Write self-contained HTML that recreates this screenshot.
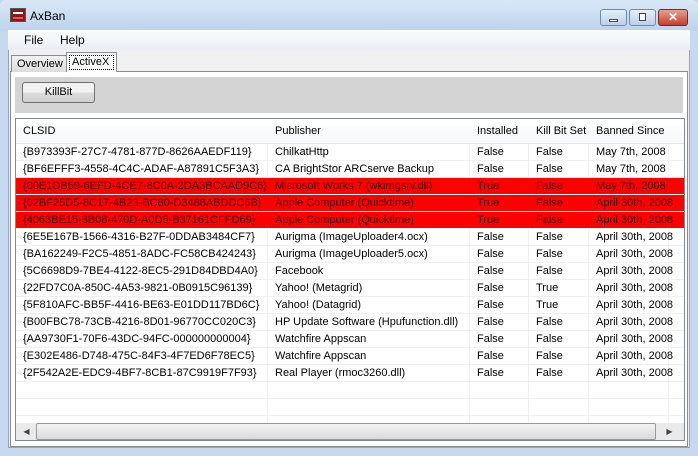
<!DOCTYPE html>
<html><head><meta charset="utf-8"><style>
*{margin:0;padding:0;box-sizing:border-box}
body{width:698px;height:456px;overflow:hidden;background:#c6d9ee;font-family:"Liberation Sans",sans-serif;font-size:11px;color:#000;position:relative}
.title{position:absolute;left:0;top:0;width:698px;height:31px;background:linear-gradient(#dae8f7,#bcd3ec);border-radius:6px 6px 0 0}
.abs{position:absolute}
.client{position:absolute;left:8px;top:30px;width:682px;height:418px;background:#f0f0f0;border:1px solid #8fa5c0}
.menu{position:absolute;left:8px;top:30px;width:682px;height:20px;background:linear-gradient(#fafcfe,#eaeef4)}
.tabpanel{position:absolute;left:10px;top:71px;width:678px;height:376px;background:#fff;border:1px solid #898c95}
.gray{position:absolute;left:15px;top:77px;width:668px;height:36px;background:#d4d4d4}
.btn{position:absolute;left:22px;top:82px;width:73px;height:21px;border:1px solid #707070;border-radius:3px;background:linear-gradient(#f2f2f2 50%,#dddddd 50%,#cfcfcf);text-align:center;line-height:19px}
.list{position:absolute;left:15px;top:118px;width:670px;height:323px;border:1px solid #828790;background:#fff;overflow:hidden}
.row{position:absolute;left:0;height:17px;width:670px;border-bottom:1px solid #f0f0f0;line-height:16px;white-space:nowrap}
.row span{position:absolute;top:0;padding-left:7px}
.hdr{top:0;height:25px;line-height:25px;border-bottom:1px solid #e5e5e5;background:linear-gradient(#fff,#f7f8fa)}
.red{background:#fd0000;color:#3a0000;border-bottom-color:#fff}
.vl{position:absolute;top:0;width:1px;height:305px;background:#f0f0f0}
.sb{position:absolute;left:0;top:304px;width:668px;height:17px;background:#eaeaea}
</style></head><body>
<div class="title"></div>
<div class="abs" style="left:10px;top:8px;width:16px;height:14px;background:#8a1a1a;border:1px solid #555"><div style="margin:3px 2px;height:2px;background:#fff"></div><div style="margin:0 2px;height:2px;background:#e55"></div></div>
<div class="abs" style="left:30px;top:9px;font-size:12px">AxBan</div>
<div class="abs" style="left:600px;top:9px;width:27px;height:17px;border:1px solid #6d8bb0;border-radius:3px;background:linear-gradient(#e6eef8,#bcd0e8)"><div style="margin:9px 8px 0;height:3px;background:#fff;border:1px solid #456"></div></div>
<div class="abs" style="left:629px;top:9px;width:27px;height:17px;border:1px solid #6d8bb0;border-radius:3px;background:linear-gradient(#e6eef8,#bcd0e8)"><div style="margin:3px 9px 0;height:8px;border:1px solid #345;background:#fff"></div></div>
<div class="abs" style="left:658px;top:9px;width:30px;height:17px;border:1px solid #7a2a20;border-radius:3px;background:linear-gradient(#e8a090,#c63e2a);color:#fff;font-weight:bold;text-align:center;line-height:15px;font-size:12px">✕</div>
<div class="client"></div>
<div class="menu"></div>
<div class="abs" style="left:24px;top:33px;font-size:12px">File</div>
<div class="abs" style="left:60px;top:33px;font-size:12px">Help</div>
<div class="tabpanel"></div>
<div class="abs" style="left:11px;top:55px;width:56px;height:17px;border:1px solid #898c95;border-bottom:none;background:linear-gradient(#f2f2f2,#dcdcdc);line-height:16px;padding-left:5px">Overview</div>
<div class="abs" style="left:66px;top:52px;width:51px;height:20px;border:1px solid #898c95;border-bottom:none;background:#fff"><div style="margin:2px;border:1px dotted #000;line-height:13px;padding-left:2px">ActiveX</div></div>
<div class="gray"></div>
<div class="btn">KillBit</div>
<div class="list">
<div class="vl" style="left:251px"></div><div class="vl" style="left:453px"></div><div class="vl" style="left:512px"></div><div class="vl" style="left:572px"></div><div class="vl" style="left:652px"></div>
<div class="row hdr"><span style="left:0">CLSID</span><span style="left:252px">Publisher</span><span style="left:454px">Installed</span><span style="left:513px">Kill Bit Set</span><span style="left:573px">Banned Since</span></div>
<div class="row" style="top:25px"><span style="left:0">{B973393F-27C7-4781-877D-8626AAEDF119}</span><span style="left:252px">ChilkatHttp</span><span style="left:454px">False</span><span style="left:513px">False</span><span style="left:573px">May 7th, 2008</span></div>
<div class="row" style="top:42px"><span style="left:0">{BF6EFFF3-4558-4C4C-ADAF-A87891C5F3A3}</span><span style="left:252px">CA BrightStor ARCserve Backup</span><span style="left:454px">False</span><span style="left:513px">False</span><span style="left:573px">May 7th, 2008</span></div>
<div class="row red" style="top:59px"><span style="left:0">{00E1DB59-6EFD-4CE7-8C0A-2DA3BCAAD9C6}</span><span style="left:252px">Microsoft Works 7 (wkimgsrv.dll)</span><span style="left:454px">True</span><span style="left:513px">False</span><span style="left:573px">May 7th, 2008</span></div>
<div class="row red" style="top:76px"><span style="left:0">{02BF25D5-8C17-4B23-BC80-D3488ABDDC6B}</span><span style="left:252px">Apple Computer (Quicktime)</span><span style="left:454px">True</span><span style="left:513px">False</span><span style="left:573px">April 30th, 2008</span></div>
<div class="row red" style="top:93px"><span style="left:0">{4063BE15-3B08-470D-A0D5-B37161CFFD69}</span><span style="left:252px">Apple Computer (Quicktime)</span><span style="left:454px">True</span><span style="left:513px">False</span><span style="left:573px">April 30th, 2008</span></div>
<div class="row" style="top:110px"><span style="left:0">{6E5E167B-1566-4316-B27F-0DDAB3484CF7}</span><span style="left:252px">Aurigma (ImageUploader4.ocx)</span><span style="left:454px">False</span><span style="left:513px">False</span><span style="left:573px">April 30th, 2008</span></div>
<div class="row" style="top:127px"><span style="left:0">{BA162249-F2C5-4851-8ADC-FC58CB424243}</span><span style="left:252px">Aurigma (ImageUploader5.ocx)</span><span style="left:454px">False</span><span style="left:513px">False</span><span style="left:573px">April 30th, 2008</span></div>
<div class="row" style="top:144px"><span style="left:0">{5C6698D9-7BE4-4122-8EC5-291D84DBD4A0}</span><span style="left:252px">Facebook</span><span style="left:454px">False</span><span style="left:513px">False</span><span style="left:573px">April 30th, 2008</span></div>
<div class="row" style="top:161px"><span style="left:0">{22FD7C0A-850C-4A53-9821-0B0915C96139}</span><span style="left:252px">Yahoo! (Metagrid)</span><span style="left:454px">False</span><span style="left:513px">True</span><span style="left:573px">April 30th, 2008</span></div>
<div class="row" style="top:178px"><span style="left:0">{5F810AFC-BB5F-4416-BE63-E01DD117BD6C}</span><span style="left:252px">Yahoo! (Datagrid)</span><span style="left:454px">False</span><span style="left:513px">True</span><span style="left:573px">April 30th, 2008</span></div>
<div class="row" style="top:195px"><span style="left:0">{B00FBC78-73CB-4216-8D01-96770CC020C3}</span><span style="left:252px">HP Update Software (Hpufunction.dll)</span><span style="left:454px">False</span><span style="left:513px">False</span><span style="left:573px">April 30th, 2008</span></div>
<div class="row" style="top:212px"><span style="left:0">{AA9730F1-70F6-43DC-94FC-000000000004}</span><span style="left:252px">Watchfire Appscan</span><span style="left:454px">False</span><span style="left:513px">False</span><span style="left:573px">April 30th, 2008</span></div>
<div class="row" style="top:229px"><span style="left:0">{E302E486-D748-475C-84F3-4F7ED6F78EC5}</span><span style="left:252px">Watchfire Appscan</span><span style="left:454px">False</span><span style="left:513px">False</span><span style="left:573px">April 30th, 2008</span></div>
<div class="row" style="top:246px"><span style="left:0">{2F542A2E-EDC9-4BF7-8CB1-87C9919F7F93}</span><span style="left:252px">Real Player (rmoc3260.dll)</span><span style="left:454px">False</span><span style="left:513px">False</span><span style="left:573px">April 30th, 2008</span></div>
<div class="row" style="top:263px"></div>
<div class="row" style="top:280px"></div>
<div class="sb">
<div class="abs" style="left:2px;top:0;width:17px;height:17px;color:#444;font-size:8px;line-height:17px;text-align:center">◀</div>
<div class="abs" style="left:20px;top:0;width:620px;height:17px;border:1px solid #9a9a9a;border-radius:2px;background:linear-gradient(#f4f4f4,#dadada)"></div>
<div class="abs" style="left:645px;top:0;width:17px;height:17px;color:#444;font-size:8px;line-height:17px;text-align:center">▶</div>
</div>
</div>
</body></html>
